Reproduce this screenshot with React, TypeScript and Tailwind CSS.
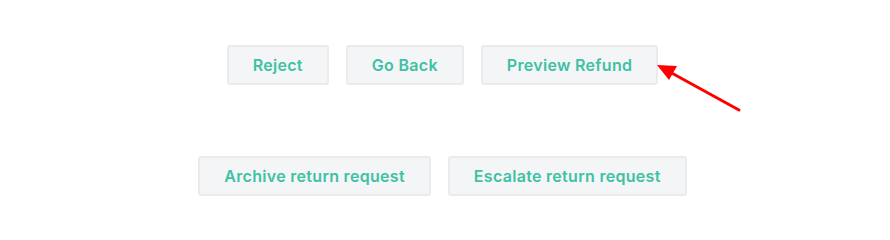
import React from "react";

const Btn = ({ children }: { children: React.ReactNode }) => (
  <button className="h-[40px] px-[24px] rounded-[3px] border-2 border-[#ebebeb] bg-[#f4f5f7] text-[#3ec1a4] text-[16px] font-semibold leading-none tracking-[0.3px]">
    {children}
  </button>
);

export default function App() {
  return (
    <div className="relative w-[885px] h-[212px] bg-white" style={{ fontFamily: "Inter, 'Open Sans', sans-serif" }}>
      <div className="flex flex-col items-center pt-[45px] gap-[71px]">
        <div className="flex gap-[17px]">
          <Btn>Reject</Btn>
          <Btn>Go Back</Btn>
          <Btn>Preview Refund</Btn>
        </div>
        <div className="flex gap-[17px]">
          <Btn>Archive return request</Btn>
          <Btn>Escalate return request</Btn>
        </div>
      </div>
      <svg className="absolute left-[650px] top-[58px]" width="100" height="60" viewBox="650 58 100 60">
        <line x1="739" y1="110" x2="668" y2="71" stroke="#ff0000" strokeWidth="3" strokeLinecap="round" />
        <polygon points="657,65 677,66 669,80" fill="#ff0000" />
      </svg>
    </div>
  );
}
